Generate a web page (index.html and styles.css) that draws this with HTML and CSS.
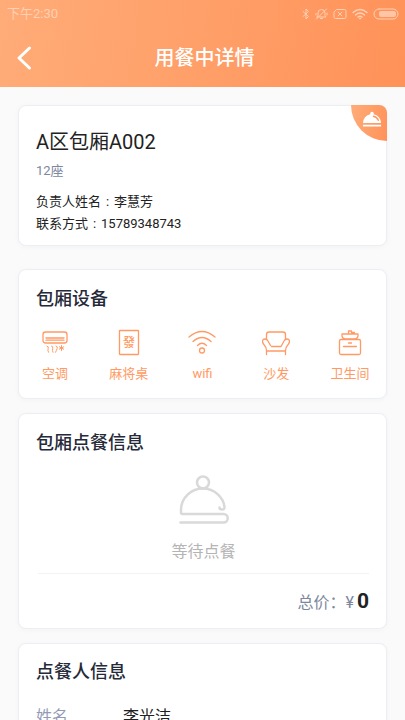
FILE: index.html
```html
<!DOCTYPE html>
<html lang="zh-CN">
<head>
<meta charset="utf-8">
<meta name="viewport" content="width=device-width, initial-scale=1">
<title>用餐中详情</title>
<link rel="stylesheet" href="styles.css">
</head>
<body>
<header class="top">
  <div class="status">
    <span>下午2:30</span>
    <div class="status-icons">
      <svg width="8" height="12" viewBox="0 0 8 12"><path d="M1 3.500 6.500 8.500 4 11V1l2.500 2.500L1 8.500"/></svg>
      <svg width="13" height="12" viewBox="0 0 13 12"><path d="M2 9h9L10 7.500V5a3.500 3.500 0 0 0-7 0v2.500zM5.500 10.500h2M1.500 11 11.500 1M1 5.500V7M12 5v2"/></svg>
      <svg width="14" height="12" viewBox="0 0 14 12"><path d="M4 1.500h7.500q1.500 0 1.500 1.500v6q0 1.500-1.500 1.500h-9Q1 10.500 1 9V4.500zM5 4l4 4M9 4 5 8"/></svg>
      <svg width="16" height="12" viewBox="0 0 16 12"><path class="waves" d="M1 4.500q7-6 14 0M3.500 7q4.500-4 9 0M6 9q2-1.700 4 0"/><circle cx="8" cy="10.500" r=".6"/></svg>
      <svg width="26" height="12" viewBox="0 0 26 12"><rect x="1" y="1" width="24" height="10" rx="5"/><rect class="charge" x="6" y="3" width="17" height="6" rx="2"/></svg>
    </div>
  </div>
  <div class="nav">
    <button class="back" type="button" aria-label="返回"><svg width="16" height="24" viewBox="0 0 16 24"><path d="M13.500 2 3 12l10.500 10"/></svg></button>
    <h1>用餐中详情</h1>
  </div>
</header>
<main>
  <section class="card room">
    <div class="corner"><svg width="20" height="18" viewBox="0 0 20 18"><path d="M1 12a9 9 0 0 1 7.300-8.800 1.800 1.800 0 1 1 3.400 0A9 9 0 0 1 19 12zM1 13.700h18v1.900H1z"/><path class="shine" d="M11.500 5.300q3.500.8 4.800 4"/></svg></div>
    <h2 class="room-name">A区包厢A002</h2>
    <p class="seats">12座</p>
    <p class="line">负责人姓名<span class="colon">:</span>李慧芳</p>
    <p class="line">联系方式<span class="colon">:</span>15789348743</p>
  </section>
  <section class="card facilities">
    <h2>包厢设备</h2>
    <ul>
      <li>
        <svg width="28" height="28" viewBox="0 0 28 28"><rect x="2" y="3" width="24" height="11" rx="2.500"/><path d="M5 9h18M5 11.200h18"/><path class="fine" d="M6 17q2 .5 1.200 2.500t.3 3.800M10.500 17q2 .5 1.200 2.500t.3 3.800M15 17q2 .5 1.200 2.500t-1.700 3.800M20.500 16.500v5M18.300 17.800l4.400 2.400M22.700 17.800l-4.400 2.400"/></svg>
        空调
      </li>
      <li>
        <svg width="28" height="28" viewBox="0 0 28 28"><rect x="4.500" y="1.500" width="19" height="24" rx=".5"/><text x="14" y="18" text-anchor="middle">發</text></svg>
        麻将桌
      </li>
      <li>
        <svg width="28" height="28" viewBox="0 0 28 28"><path d="M1 8q13-11 26 0M5 12.500q9-8 18 0M9.500 16.500q4.500-4.500 9 0"/><circle cx="14" cy="21.500" r="2.500"/></svg>
        wifi
      </li>
      <li>
        <svg width="28" height="28" viewBox="0 0 28 28"><path d="M4.500 10V5.500q0-2.500 2.500-2.500h14q2.500 0 2.500 2.500V10M8.500 16.500 6 12Q5 10 3 10C0 10 0 13 1.500 15q3 3 3 7h19q0-4 3-7c1.500-2 1.500-5-1.500-5q-2 0-3 2L19 17.500h-9.500M4.500 22v3.500M23.500 22v3.500"/></svg>
        沙发
      </li>
      <li>
        <svg width="28" height="28" viewBox="0 0 28 28"><rect x="3.500" y="10.500" width="21" height="15" rx="1.500"/><path d="M6 5h16q.5 4.500-3 5h-10q-3.500-.5-3-5zM12.500 5V2h3v1.500h3M12.500 14h3M7.500 17.500h13"/></svg>
        卫生间
      </li>
    </ul>
  </section>
  <section class="card order">
    <h2>包厢点餐信息</h2>
    <div class="empty">
      <svg width="52" height="50" viewBox="0 0 52 50"><circle cx="25" cy="7.500" r="6"/><path d="M2.500 47.500h43a4 4 0 0 0 0-8.500h-41q-1.500 0-1.500-1.500v-3a22 21.500 0 0 1 22-21c12 0 20.500 9.500 21.500 18.500q.2 2.500-2.500 2.500-2.500 0-2.500-2"/></svg>
      <p>等待点餐</p>
    </div>
    <p class="total">总价：<span>¥</span><strong>0</strong></p>
  </section>
  <section class="card person">
    <h2>点餐人信息</h2>
    <dl><dt>姓名</dt><dd>李光洁</dd></dl>
  </section>
</main>
</body>
</html>
```
FILE: styles.css
```css
* { box-sizing: border-box; }
html { height: 100%; overflow: hidden; }
body {
  height: 100%;
  margin: 0;
  overflow: hidden;
  background: #fafafa;
  color: #222;
  font: 13px/22px Roboto, "Noto Sans CJK SC", sans-serif;
}
h1, h2, p, ul, dl, dd { margin: 0; padding: 0; }
svg { display: block; fill: none; stroke: currentColor; stroke-linecap: round; stroke-linejoin: round; }

.top {
  height: 87px;
  background: linear-gradient(100deg, #ffac78, #ff9259);
  color: #fff;
}
.status {
  display: flex;
  justify-content: space-between;
  align-items: center;
  height: 28px;
  padding: 0 6px 0 7px;
  color: #ffd0b3;
}
.status-icons { display: flex; align-items: center; gap: 5px; }
.charge { fill: #ffc5a4; stroke: none; }
.waves { stroke-width: 1.4; }
.nav {
  display: grid;
  grid-template-columns: 48px 1fr 44px;
  align-items: center;
  height: 59px;
}
.back { justify-self: center; padding: 0; border: 0; background: none; color: #fff; cursor: pointer; }
.back svg { stroke-width: 3; }
h1 { font-size: 20px; line-height: 28px; font-weight: 500; text-align: center; }

main { display: flex; flex-direction: column; padding: 18px 18px 0; }
.card {
  flex: none;
  margin-bottom: 14px;
  background: #fff;
  border: 1px solid #eceef4;
  border-radius: 8px;
  box-shadow: 0 1px 4px #e8eaf066;
}
.card h2 { padding: 0 17px; color: #262a38; font-size: 18px; line-height: 26px; font-weight: 500; }

.room { position: relative; margin-bottom: 23px; padding: 22px 17px 10px; }
.room .room-name { padding: 0; color: #222; font-size: 20px; line-height: 28px; font-weight: 400; }
.seats { margin: 4px 0 9px; color: #7d879d; }
.colon { display: inline-block; width: 13px; text-align: center; }
.corner {
  position: absolute;
  top: -1px;
  right: -1px;
  width: 36px;
  height: 36px;
  padding: 6px 0 0 11px;
  border-radius: 0 8px 0 36px;
  background: linear-gradient(100deg, #ffac78, #ff9259);
}
.corner path { fill: #fff; stroke: none; }
.corner .shine { fill: none; stroke: #ff9b64; stroke-width: 1.5; }

.facilities { padding: 16px 0 13px; }
.facilities ul { display: grid; grid-template-columns: repeat(5, 1fr); margin: 17px -1px 0; list-style: none; }
.facilities li { display: flex; flex-direction: column; align-items: center; gap: 6px; color: #ff9a64; }
.facilities svg { stroke-width: 1.3; }
.facilities .fine { stroke-width: 1; }
.facilities text { fill: currentColor; stroke: none; font-size: 12px; font-weight: 500; }

.order { padding: 16px 0 11px; }
.empty { display: flex; flex-direction: column; align-items: center; gap: 15px; margin: 19px 17px 0 19px; padding-bottom: 9px; border-bottom: 1px solid #f3f3f5; color: #b4b4b4; font-size: 16px; line-height: 24px; }
.empty svg { color: #d9d9d9; stroke-width: 2.5; }
.total { display: flex; justify-content: flex-end; align-items: baseline; margin-top: 13px; padding-right: 17px; color: #7d879d; font-size: 16px; line-height: 28px; }
.total strong { margin-left: 3px; color: #222; font-size: 21px; }

.person { padding: 15px 0; }
.person dl { display: grid; grid-template-columns: 87px 1fr; margin-top: 20px; padding: 0 17px; font-size: 16px; line-height: 24px; }
.person dt { color: #929bb5; }
```
